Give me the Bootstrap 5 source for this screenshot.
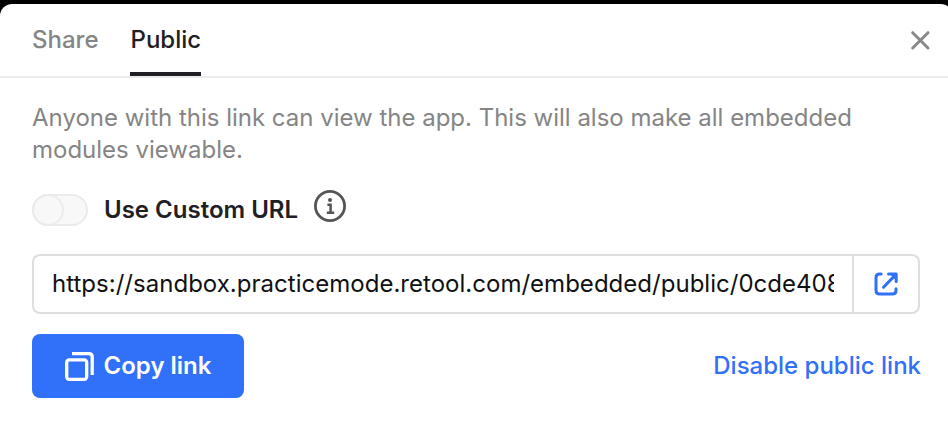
<!DOCTYPE html>
<html lang="en">
<head>
<meta charset="utf-8">
<meta name="viewport" content="width=device-width, initial-scale=1">
<title>Share app</title>
<link href="https://cdn.jsdelivr.net/npm/bootstrap@5.3.0/dist/css/bootstrap.min.css" rel="stylesheet">
<style>
body{background:#000;font-family:Inter,"Liberation Sans",sans-serif;font-size:24px;line-height:32px;color:#1f2023;height:424px;overflow:hidden}
.dialog-panel{height:420px;border-radius:12px 8px 0 0 / 12px 3px 0 0}
.dialog-head{height:74px;border-bottom:2px solid #ebebeb;padding:0 16px 0 32px}
.share-tabs{gap:31px}
.share-tabs .nav-link{height:72px;padding:20px 0 0;color:#858585;font-weight:500;border-radius:0}
.share-tabs .nav-link.active{color:#1f2023;border-bottom:4px solid #1f2023;padding-left:1px}
.close-x{line-height:0;color:#8a8a8a}
.dialog-main{padding:24px 28px 0 32px}
.hint{color:#858585;letter-spacing:-.005px}
.toggle{width:56px;height:32px;border:2px solid #ebebeb;border-radius:16px;background:#f8f8f8}
.toggle span{display:block;width:32px;height:32px;margin:-2px;border:2px solid #ebebeb;border-radius:50%}
.url-row{height:60px;margin-top:24px}
.url-row .form-control{border:2px solid #dedede;border-right:0;border-radius:8px 0 0 8px;padding:0 18px;font-size:24px;color:#101112;letter-spacing:.02px}
.url-row .btn{width:68px;border:2px solid #dedede;border-radius:0 8px 8px 0;color:#3170f9;margin-left:0!important}
.action-row{margin-top:20px}
.copy-btn{width:212px;height:64px;border-radius:8px;background:#3170f9!important;font-size:24px;font-weight:600;gap:10px}
.off-link{color:#3170f9;font-weight:500;margin-right:-1px}
</style>
</head>
<body class="pt-1">
<div class="dialog-panel bg-white">
  <header class="dialog-head d-flex justify-content-between">
    <nav class="nav share-tabs">
      <a class="nav-link" href="#">Share</a>
      <a class="nav-link active" href="#">Public</a>
    </nav>
    <button class="btn p-0 border-0 close-x" aria-label="Close"><svg width="24" height="24" viewBox="0 0 24 24" fill="none" stroke="currentColor" stroke-width="3" stroke-linecap="round"><path d="M4.7 4.7 20 20M20 4.7 4.7 20"/></svg></button>
  </header>
  <main class="dialog-main">
    <p class="hint mb-0">Anyone with this link can view the app. This will also make all embedded<br>modules viewable.</p>
    <div class="d-flex align-items-center mt-4">
      <div class="toggle flex-shrink-0" role="switch" aria-checked="false" aria-label="Use Custom URL"><span></span></div>
      <span class="fw-semibold ms-3">Use Custom URL</span>
      <svg class="ms-3 mb-2" width="32" height="32" viewBox="0 0 32 32" fill="none" stroke="#555" role="img" aria-label="Info"><circle cx="16" cy="16" r="14.6" stroke-width="2.8"/><circle cx="16" cy="10" r="2" fill="#555" stroke="none"/><path d="M13.4 14.8H16.6V22.6M12.8 22.8H20.2" stroke-width="2.5"/></svg>
    </div>
    <div class="input-group flex-nowrap url-row">
      <input class="form-control" type="text" readonly aria-label="Public link" value="https://sandbox.practicemode.retool.com/embedded/public/0cde408b">
      <button class="btn p-0 d-flex align-items-center justify-content-center" aria-label="Open link"><svg width="24" height="24" viewBox="0 0 24 24" fill="none" stroke="currentColor" stroke-width="3" stroke-linecap="round"><path d="M7.2 2H5.5Q2 2 2 5.5V18.5Q2 22 5.5 22H18.5Q22 22 22 18.5V16.8M9.5 15.2 20 4.4" /><path d="M14.5 2H22.2V9.5" stroke-linejoin="round"/><path d="M16 2H22V8.5Z" fill="currentColor" stroke="none"/></svg></button>
    </div>
    <div class="d-flex justify-content-between align-items-center action-row">
      <button class="btn btn-primary border-0 p-0 d-flex align-items-center justify-content-center copy-btn"><svg width="29" height="29" viewBox="0 0 29 29" fill="none" stroke="currentColor" stroke-width="3.3"><rect x="1.7" y="7.9" width="20" height="19.4" rx="2.5"/><path d="M7 1.7H24Q27.2 1.7 27.2 4.9V23"/></svg><span>Copy link</span></button>
      <a class="text-decoration-none off-link" href="#">Disable public link</a>
    </div>
  </main>
</div>
<script src="https://cdn.jsdelivr.net/npm/bootstrap@5.3.0/dist/js/bootstrap.bundle.min.js"></script>
</body>
</html>
